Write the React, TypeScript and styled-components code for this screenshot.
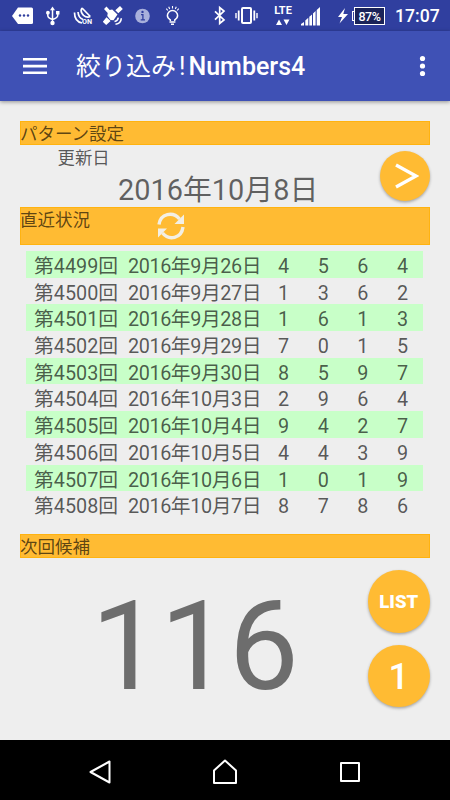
import React from "react";
import styled, { createGlobalStyle } from "styled-components";

const Global = createGlobalStyle`
  * { box-sizing: border-box; }
  body { margin: 0; background: #eee; font-family: Roboto, "Noto Sans CJK JP", sans-serif; }
`;

const Screen = styled.div`
  width: 450px;
  height: 800px;
  display: flex;
  flex-direction: column;
  overflow: hidden;
  background: #eee;
`;

const StatusBar = styled.div`
  height: 31px;
  flex: none;
  display: flex;
  background: #303f9f;
  color: #fff;
`;

const StatusIcon = styled.svg<{ $left: number; $w: number }>`
  flex: none;
  width: ${(p) => p.$w}px;
  height: 31px;
  margin-left: ${(p) => p.$left}px;
  display: block;
  fill: none;
  stroke: #fff;
`;

const NetworkLabel = styled.div`
  width: 20px;
  margin-left: 15px;
  padding-top: 4px;
  text-align: center;
  font-size: 11px;
  line-height: 13px;
  font-weight: 700;
  white-space: nowrap;
`;

const NetworkArrows = styled.svg`
  display: block;
  margin: 2px auto 0;
  width: 14px;
  height: 7px;
  fill: #fff;
`;

const Battery = styled.div`
  width: 31px;
  height: 18px;
  margin: 7px 0 0 3px;
  border: 1px solid #fff;
  background: #1a2359;
  font-size: 12.5px;
  line-height: 17px;
  font-weight: 500;
  text-align: center;
  letter-spacing: -0.4px;
`;

const BatteryTip = styled.div`
  width: 3px;
  height: 10px;
  margin: 11px -4px 0 4px;
  border: 1px solid #fff;
  border-right: 0;
`;

const Clock = styled.div`
  margin-left: 10px;
  font-size: 17.6px;
  line-height: 33px;
  font-weight: 500;
`;

const AppBar = styled.header`
  height: 70px;
  flex: none;
  display: flex;
  align-items: center;
  padding: 0 24px 0 23px;
  background: #3f51b5;
  box-shadow: 0 1px 4px rgba(0, 0, 0, 0.4);
  color: #fff;
`;

const MenuIcon = styled.svg`
  width: 24px;
  height: 18px;
  display: block;
  fill: #fff;
`;

const Title = styled.h1`
  flex: 1;
  margin: 2px 0 0 29px;
  font-size: 25px;
  line-height: 36px;
  font-weight: 500;
  white-space: nowrap;
`;

const TitleKana = styled.span`
  font-weight: 400;
`;

const TitleMark = styled.span`
  padding: 0 3px 0 3px;
  font-weight: 400;
`;

const MoreIcon = styled.svg`
  width: 8px;
  height: 22px;
  display: block;
  fill: #fff;
`;

const Content = styled.main`
  flex: 1;
  padding: 20px 20px 0;
  display: flex;
  flex-direction: column;
`;

const Band = styled.div<{ $h: number }>`
  height: ${(p) => p.$h}px;
  flex: none;
  display: flex;
  background: #ffbb33;
  border: 1px solid #ffb310;
  color: rgba(0, 0, 0, 0.65);
  font-size: 17.5px;
  line-height: 24px;
`;

const BandLabel = styled.span`
  margin-left: -1px;
`;

const RefreshIcon = styled.svg`
  display: block;
  width: 30px;
  height: 28px;
  margin: 4px 0 0 66px;
`;

const PatternPanel = styled.section`
  height: 62px;
  flex: none;
  display: flex;
  justify-content: space-between;
`;

const DateBlock = styled.div`
  padding-left: 37.5px;
`;

const DateCaption = styled.div`
  height: 24px;
  font-size: 17.4px;
  line-height: 26px;
  color: rgba(0, 0, 0, 0.65);
`;

const DateValue = styled.div`
  padding-left: 60.5px;
  font-size: 28.9px;
  line-height: 42px;
  color: rgba(0, 0, 0, 0.6);
  white-space: nowrap;
`;

const Round = styled.button<{ $d: number; $font?: number; $weight?: number }>`
  width: ${(p) => p.$d}px;
  height: ${(p) => p.$d}px;
  flex: none;
  padding: 2px 0 0;
  border: 0;
  border-radius: 50%;
  display: flex;
  align-items: center;
  justify-content: center;
  background: #ffbb33;
  color: #fff;
  font-family: inherit;
  font-size: ${(p) => p.$font ?? 18}px;
  font-weight: ${(p) => p.$weight ?? 500};
  box-shadow: 0 1.5px 3px rgba(0, 0, 0, 0.3);
`;

const NextButton = styled(Round)`
  margin-top: 6px;
  padding: 0;
`;

const Chevron = styled.svg`
  width: 24px;
  height: 26px;
  margin-left: 3px;
  fill: none;
  stroke: #fff;
  stroke-width: 3.4;
`;

const Results = styled.section`
  margin: 6px 7.5px 0 6px;
  height: 283px;
  flex: none;
`;

const Row = styled.div<{ $shaded: boolean }>`
  height: 26.7px;
  display: grid;
  grid-template-columns: 94px 138px repeat(4, 39.67px);
  padding-left: 8px;
  background: ${(p) => (p.$shaded ? "#c8ffc8" : "transparent")};
  color: rgba(0, 0, 0, 0.65);
  font-size: 19.8px;
  line-height: 31px;
  white-space: nowrap;
`;

const DateCell = styled.span`
  letter-spacing: -0.4px;
`;

const Digit = styled.span`
  padding-left: 12px;
`;

const Candidate = styled.section`
  flex: 1;
  display: flex;
  justify-content: space-between;
`;

const CandidateValue = styled.div`
  padding: 15px 0 0 71px;
  font-size: 124.7px;
  line-height: 146px;
  letter-spacing: -1.2px;
  color: #6d6d6d;
`;

const Buttons = styled.div`
  display: flex;
  flex-direction: column;
  gap: 12px;
  padding-top: 12px;
`;

const NavBar = styled.nav`
  height: 60px;
  flex: none;
  display: flex;
  justify-content: space-between;
  padding: 19px 86px 0 86px;
  background: #000;
`;

const NavIcon = styled.svg`
  display: block;
  width: 28px;
  height: 28px;
  fill: none;
  stroke: #fff;
  stroke-width: 2;
  stroke-linejoin: round;
`;

const draws: [number, string, string][] = [
  [4499, "2016年9月26日", "4564"],
  [4500, "2016年9月27日", "1362"],
  [4501, "2016年9月28日", "1613"],
  [4502, "2016年9月29日", "7015"],
  [4503, "2016年9月30日", "8597"],
  [4504, "2016年10月3日", "2964"],
  [4505, "2016年10月4日", "9427"],
  [4506, "2016年10月5日", "4439"],
  [4507, "2016年10月6日", "1019"],
  [4508, "2016年10月7日", "8786"],
];

const Status = () => (
  <StatusBar>
    <StatusIcon $left={12} $w={21} viewBox="0 0 21 31">
      <path d="M6 7.5H19.5Q21 7.5 21 9V22.5Q21 24 19.5 24H6L0 16Z" fill="#fff" stroke="none" />
      <g fill="#303f9f" stroke="none">
        <circle cx="8" cy="15.5" r="1.2" /><circle cx="12" cy="15.5" r="1.2" /><circle cx="16" cy="15.5" r="1.2" />
      </g>
    </StatusIcon>
    <StatusIcon $left={13} $w={14} viewBox="0 0 14 31" strokeWidth="1.5">
      <path d="M6.5 9V23M1.8 12V15.5Q1.8 18 6.5 19.5Q11.8 18 11.8 15V13" />
      <path d="M6.5 6.5L9 10.2H4Z" fill="#fff" stroke="none" />
      <circle cx="1.9" cy="12.7" r="1.9" fill="#fff" stroke="none" />
      <path d="M10 11H13.5V14.5H10Z" fill="#fff" stroke="none" />
      <circle cx="6.5" cy="23" r="2.2" fill="#fff" stroke="none" />
    </StatusIcon>
    <StatusIcon $left={13} $w={20} viewBox="0 0 20 31" strokeWidth="1.7">
      <path d="M1.5 12.5Q1.5 21.5 9 23M5 12Q5.5 18 10 19.5" />
      <path d="M9 8Q6.8 11.5 10.5 15.3Q14 18.3 17.3 16.5M9 8L17.3 16.5" />
      <text x="9" y="24.4" fill="#fff" stroke="none" fontSize="7.2" fontWeight="700">ON</text>
    </StatusIcon>
    <StatusIcon $left={10} $w={20} viewBox="0 0 20 31">
      <g transform="translate(9.5 15.5)" fill="#fff" stroke="none">
        <path d="M-8.5 -6.5L-6 -9L-2.8 -5.5L-0.3 -6L5 -1L1 4.8L-2 4.5L-5.2 0.5L-4.8 -2.5Z" />
        <path d="M2.8 -5.3L7.5 -9.5L10.3 -6.5L5.8 -2.3ZM-6 1.7L-1.9 5.4L-6.3 9.5L-9.7 6.3Z" />
        <path d="M2 6Q5.3 5.5 5.8 2.2M3 8.8Q8.5 8 8.8 2.7" fill="none" stroke="#fff" strokeWidth="1.6" />
      </g>
    </StatusIcon>
    <StatusIcon $left={12} $w={15} viewBox="0 0 15 31">
      <circle cx="7.5" cy="16" r="7.3" fill="#a8b0dc" stroke="none" />
      <path d="M6 14.6H7.9V19.6M5.7 19.9H10" stroke="#303f9f" strokeWidth="1.3" />
      <circle cx="7.5" cy="11.9" r="1.2" fill="#303f9f" stroke="none" />
    </StatusIcon>
    <StatusIcon $left={15} $w={15} viewBox="0 0 15 31" strokeWidth="1.5">
      <path d="M5.3 21V19.8Q2.4 18.2 2.4 15.6A5.1 5.1 0 0 1 12.6 15.6Q12.6 18.2 9.8 19.8V21M4.5 22H10.4M6 24.2H9" />
      <path d="M7.5 6V8.5M3.7 6.7L4.7 8.9M11.3 6.7L10.3 8.9M1.3 8.7L2.8 10.5M13.7 8.7L12.2 10.5" strokeWidth="1.1" />
    </StatusIcon>
    <StatusIcon $left={34} $w={12} viewBox="0 0 12 31" strokeWidth="1.7">
      <path d="M1 11.3L10 20L5.7 23.5V7.5L10 11L1 19.7" />
    </StatusIcon>
    <StatusIcon $left={9} $w={23} viewBox="0 0 23 31" strokeWidth="2">
      <rect x="7" y="8" width="9" height="15" rx="1" />
      <path d="M3.7 10.5V20.5M19.3 10.5V20.5" strokeWidth="1.8" />
      <path d="M1 13V18.3M22 13V18.3" strokeWidth="1.4" />
    </StatusIcon>
    <NetworkLabel>
      LTE
      <NetworkArrows viewBox="0 0 14 7"><path d="M0 6L3 0.5L6 6ZM7.5 0.5H13.5L10.5 6Z" /></NetworkArrows>
    </NetworkLabel>
    <StatusIcon $left={8} $w={20} viewBox="0 0 20 31">
      <path d="M0 25.5V24L3 22V25.5ZM4.3 25.5V20.5L7.3 17.8V25.5ZM8.3 25.5V16.8L11 14.4V25.5ZM12 25.5V13.4L14.6 11V25.5ZM15.7 25.5V10L19 7V25.5Z" fill="#fff" stroke="none" />
    </StatusIcon>
    <StatusIcon $left={17} $w={10} viewBox="0 0 10 31">
      <path d="M7 8L0 17H4L1.5 23.5L10 14H5.3Z" fill="#fff" stroke="none" />
    </StatusIcon>
    <BatteryTip />
    <Battery>87%</Battery>
    <Clock>17:07</Clock>
  </StatusBar>
);

export default function App() {
  return (
    <>
      <Global />
      <Screen>
        <Status />
        <AppBar>
          <MenuIcon viewBox="0 0 24 18">
            <path d="M0 1H24V3.6H0ZM0 7.8H24V10.4H0ZM0 14.5H24V17.1H0Z" />
          </MenuIcon>
          <Title><TitleKana>絞り込み</TitleKana><TitleMark>!</TitleMark>Numbers4</Title>
          <MoreIcon viewBox="0 0 8 22">
            <circle cx="4.5" cy="3.5" r="2.6" /><circle cx="4.5" cy="11" r="2.6" /><circle cx="4.5" cy="18.5" r="2.6" />
          </MoreIcon>
        </AppBar>
        <Content>
          <Band $h={24}><BandLabel>パターン設定</BandLabel></Band>
          <PatternPanel>
            <DateBlock>
              <DateCaption>更新日</DateCaption>
              <DateValue>2016年10月8日</DateValue>
            </DateBlock>
            <NextButton $d={50} aria-label="次へ">
              <Chevron viewBox="0 0 24 26"><path d="M1 2L21 13L1 24" /></Chevron>
            </NextButton>
          </PatternPanel>
          <Band $h={38}>
            <BandLabel>直近状況</BandLabel>
            <RefreshIcon viewBox="0 0 30 28" fill="none" stroke="#f3efe4" strokeWidth="3.4">
              <path d="M3 12.5C4.5 1.5 17 -1 23.5 7" />
              <path d="M28 2.5V12H18.5Z" fill="#f3efe4" stroke="none" />
              <path d="M27 15C25.5 26.5 13 29 6.5 21" />
              <path d="M2 25.5V16.5H11Z" fill="#f3efe4" stroke="none" />
            </RefreshIcon>
          </Band>
          <Results>
            {draws.map(([no, date, digits], i) => (
              <Row key={no} $shaded={i % 2 === 0}>
                <span>第{no}回</span>
                <DateCell>{date}</DateCell>
                {digits.split("").map((d, j) => <Digit key={j}>{d}</Digit>)}
              </Row>
            ))}
          </Results>
          <Band $h={24}><BandLabel>次回候補</BandLabel></Band>
          <Candidate>
            <CandidateValue>116</CandidateValue>
            <Buttons>
              <Round $d={62.5} $font={18.5} $weight={900}>LIST</Round>
              <Round $d={62.5} $font={36} $weight={500}>1</Round>
            </Buttons>
          </Candidate>
        </Content>
        <NavBar>
          <NavIcon viewBox="0 0 28 28"><path d="M4.5 13L23.5 2.5V23.5Z" /></NavIcon>
          <NavIcon viewBox="0 0 28 28"><path d="M14 1.5L25 11.5V24H3V11.5Z" /></NavIcon>
          <NavIcon viewBox="0 0 28 28"><rect x="5" y="4" width="18" height="18" /></NavIcon>
        </NavBar>
      </Screen>
    </>
  );
}
